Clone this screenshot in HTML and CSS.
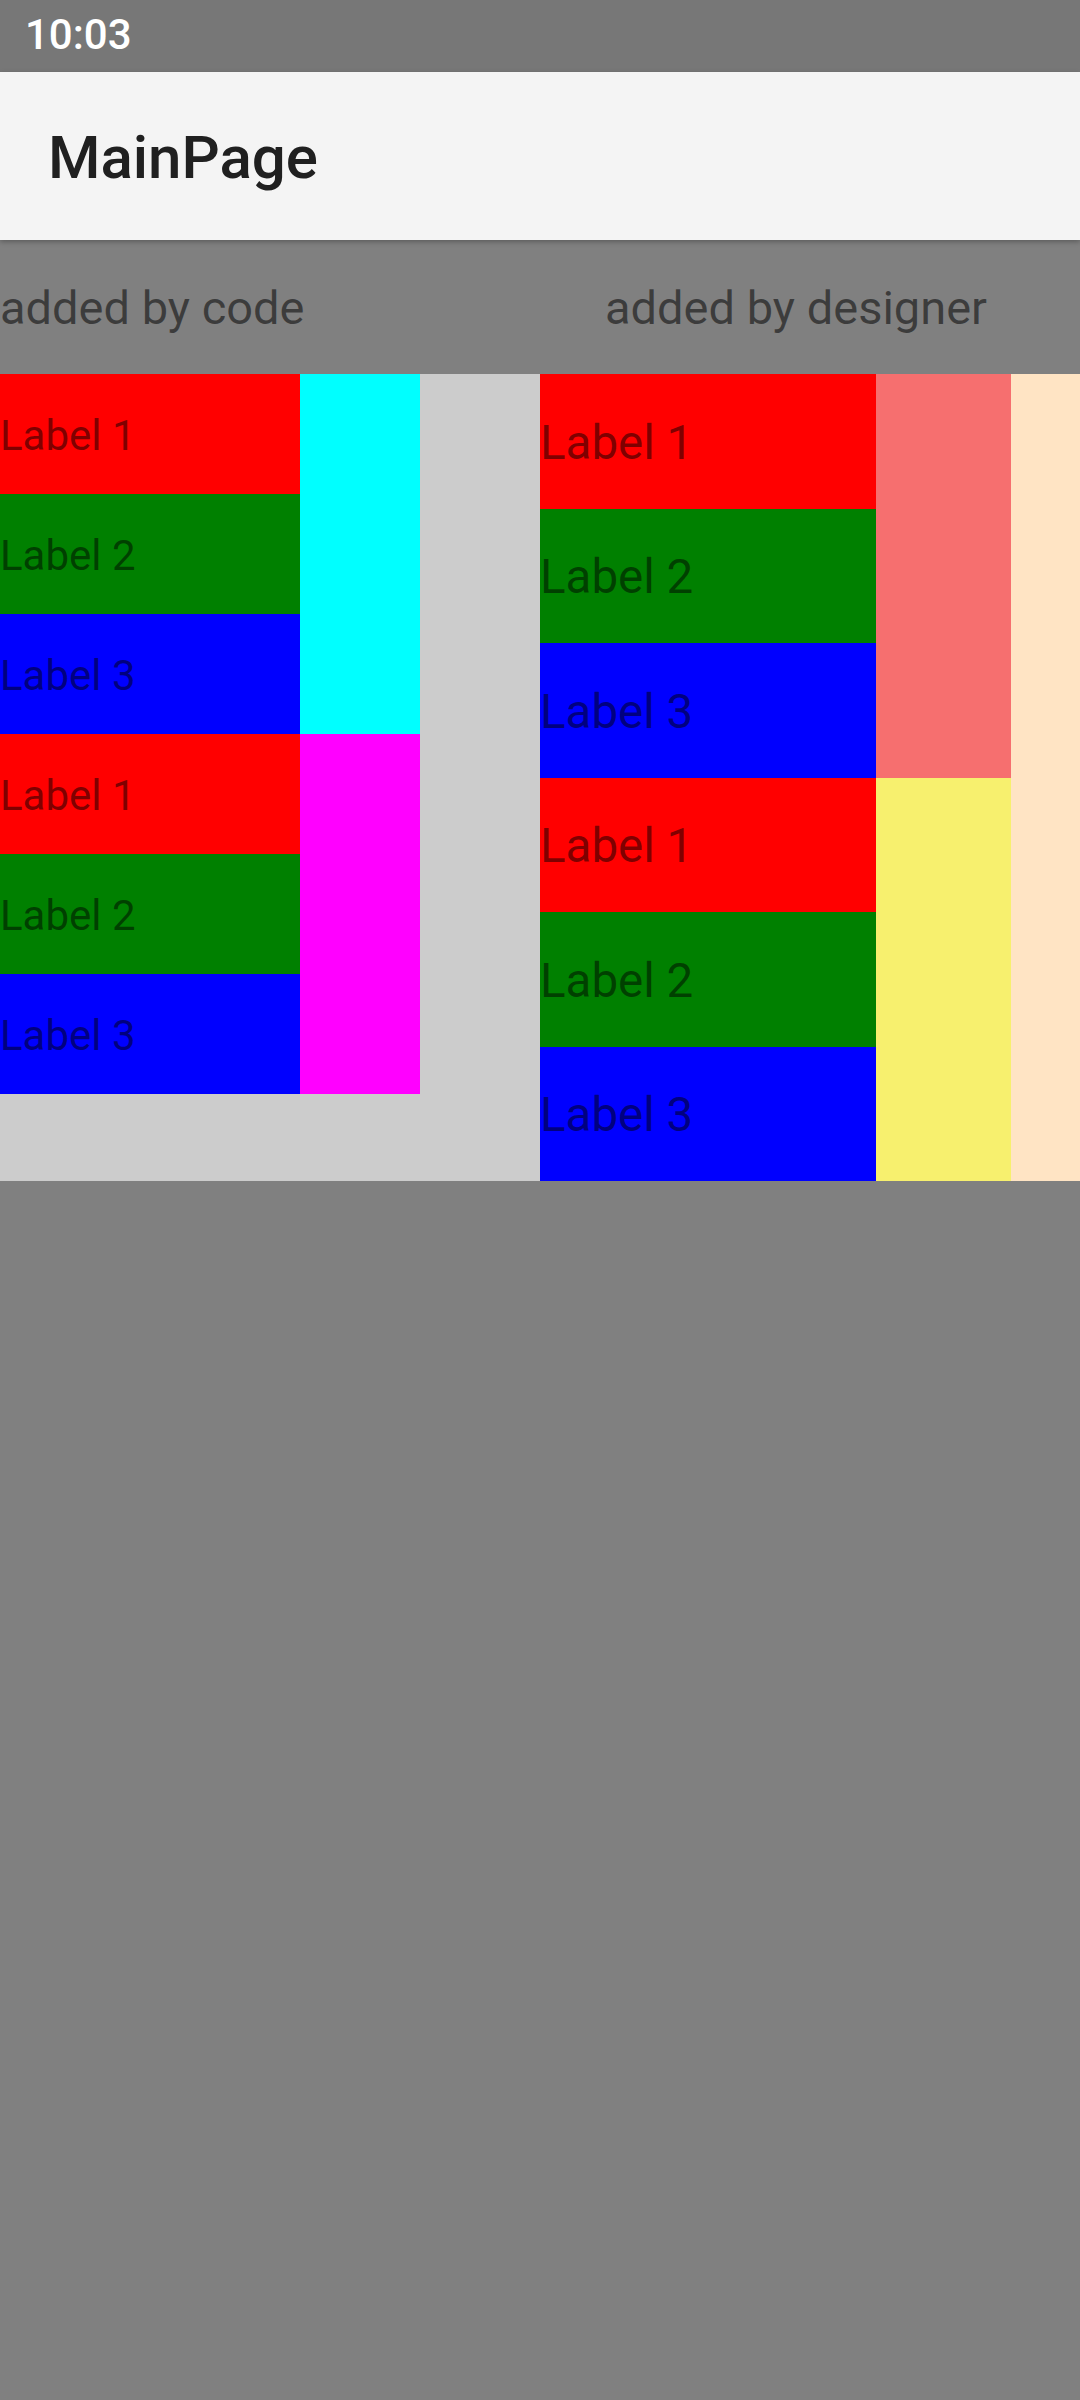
FILE: index.html
```html
<!DOCTYPE html>
<html lang="en">
<head>
<meta charset="utf-8">
<title>MainPage</title>
<link rel="stylesheet" href="styles.css">
</head>
<body>
  <div class="status-bar"><span class="clock">10:03</span></div>
  <header class="app-bar"><h1 class="title">MainPage</h1></header>
  <main class="page">
    <div class="headers">
      <div class="head head-code">added by code</div>
      <div class="head head-designer">added by designer</div>
    </div>
    <div class="panels">
      <section class="panel panel-code">
        <div class="cell red"><span class="lbl">Label 1</span></div>
        <div class="cell green"><span class="lbl">Label 2</span></div>
        <div class="cell blue"><span class="lbl">Label 3</span></div>
        <div class="cell red"><span class="lbl">Label 1</span></div>
        <div class="cell green"><span class="lbl">Label 2</span></div>
        <div class="cell blue"><span class="lbl">Label 3</span></div>
        <div class="side cyan"></div>
        <div class="side magenta"></div>
      </section>
      <section class="panel panel-designer">
        <div class="cell red"><span class="lbl">Label 1</span></div>
        <div class="cell green"><span class="lbl">Label 2</span></div>
        <div class="cell blue"><span class="lbl">Label 3</span></div>
        <div class="cell red"><span class="lbl">Label 1</span></div>
        <div class="cell green"><span class="lbl">Label 2</span></div>
        <div class="cell blue"><span class="lbl">Label 3</span></div>
        <div class="side coral"></div>
        <div class="side yellow"></div>
        <div class="far bisque"></div>
      </section>
    </div>
  </main>
</body>
</html>
```
FILE: styles.css
```css
html, body {
  margin: 0;
  padding: 0;
}
body {
  width: 1080px;
  min-height: 2400px;
  background: #808080;
  font-family: Roboto, "Noto Sans", "Liberation Sans", sans-serif;
}
.status-bar {
  height: 72px;
  background: #777777;
  display: flex;
  align-items: center;
  padding-left: 25px;
  box-sizing: border-box;
}
.clock {
  color: #ffffff;
  font-size: 42px;
  font-weight: 500;
  line-height: 1;
  padding-bottom: 2px;
}
.app-bar {
  height: 168px;
  background: #f4f4f4;
  display: flex;
  align-items: center;
  padding-left: 48px;
  box-sizing: border-box;
  box-shadow: 0 2px 5px rgba(0, 0, 0, 0.28);
  position: relative;
  z-index: 1;
}
.title {
  margin: 0;
  font-size: 60px;
  font-weight: 500;
  color: #202020;
  line-height: 1;
  padding-top: 4px;
}
.headers {
  display: flex;
  height: 134px;
}
.head {
  display: flex;
  align-items: center;
  font-size: 47px;
  color: rgba(0, 0, 0, 0.54);
  padding-top: 1px;
  box-sizing: border-box;
}
.head-code {
  width: 540px;
}
.head-designer {
  width: 540px;
  padding-left: 65px;
}
.panels {
  display: flex;
  height: 807px;
}
.panel {
  width: 540px;
  display: grid;
}
.panel-code {
  background: #cccccc;
  grid-template-columns: 300px 120px;
  grid-template-rows: repeat(6, 120px);
  grid-auto-flow: column;
}
.panel-designer {
  grid-template-columns: 336px 135px 69px;
  grid-template-rows: repeat(6, 1fr);
  grid-auto-flow: column;
}
.cell {
  display: flex;
  align-items: center;
  color: rgba(0, 0, 0, 0.5);
}
.panel-code .lbl {
  font-size: 42px;
  padding-top: 3px;
}
.panel-designer .lbl {
  font-size: 47.5px;
  padding-top: 3px;
}
.side {
  grid-row: span 3;
}
.far {
  grid-row: 1 / span 6;
}
.red { background: #ff0000; }
.green { background: #008000; }
.blue { background: #0000ff; }
.cyan { background: #00ffff; }
.magenta { background: #ff00ff; }
.coral { background: #f66f6f; }
.yellow { background: #f7f06e; }
.bisque { background: #ffe4c4; }
```
